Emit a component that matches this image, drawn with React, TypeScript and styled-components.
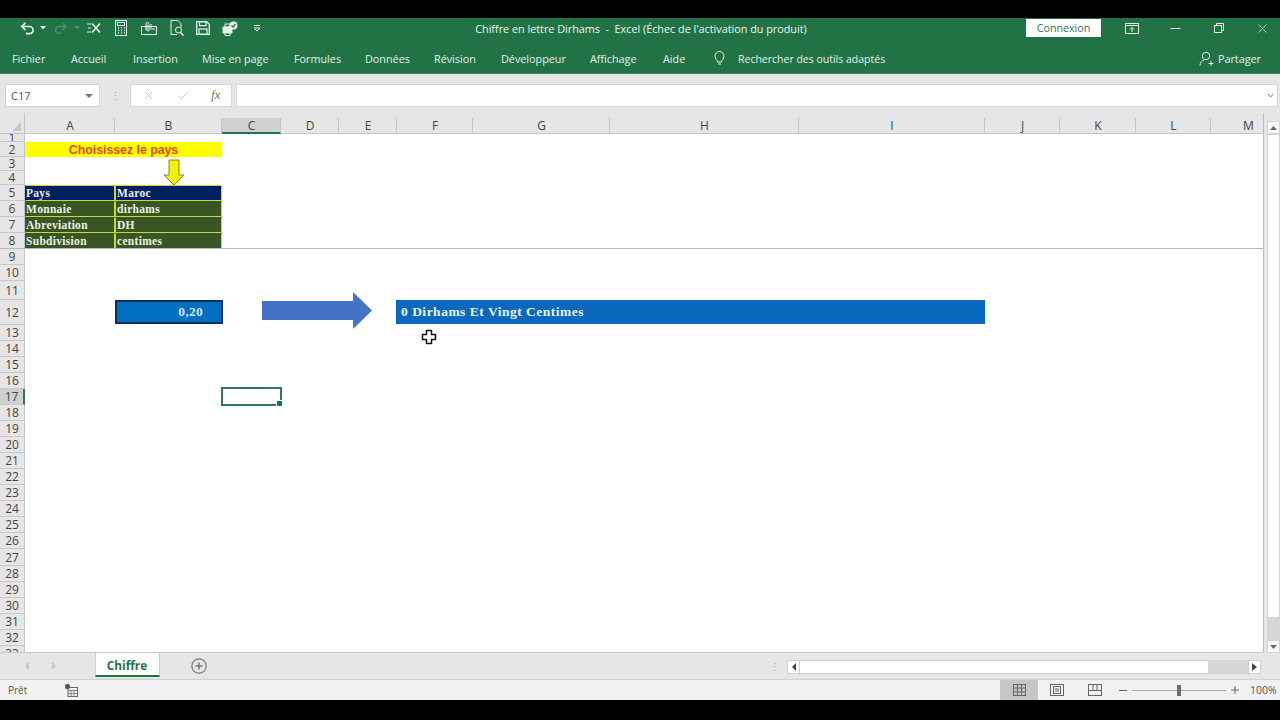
import React from "react";
import styled, { createGlobalStyle } from "styled-components";
import { X, Check, ChevronDown } from "lucide-react";

const Global = createGlobalStyle`
  html, body { margin: 0; padding: 0; background: #000; }
  #root { width: 1280px; height: 720px; overflow: hidden; }
  * { box-sizing: border-box; }
`;

const ui = `"Open Sans", "Noto Sans", sans-serif`;
const cols = [90, 107, 59, 58, 58, 76, 137, 189, 186, 75, 76, 75, 75];
const colNames = ["A", "B", "C", "D", "E", "F", "G", "H", "I", "J", "K", "L", "M"];
const rowHeights = [8, 15, 14, 14, 16, 16, 16, 16, 16, 16, 19, 25, 16, 16, 16, 16, 16, 16, 16, 16, 16, 16, 16, 16, 16, 16, 17, 16, 16, 16, 16, 16, 16];

const Page = styled.div`
  width: 1280px; height: 720px; background: #000;
  padding: 18px 0 20px; display: flex; flex-direction: column;
  font-family: ${ui};
`;
const TitleBar = styled.header`
  height: 27px; background: #217346; color: #e8f1ec; padding-bottom: 7px;
  display: grid; grid-template-columns: 1fr auto 1fr; align-items: center;
`;
const Qat = styled.div`
  display: flex; align-items: center; padding-left: 20px; height: 100%;
`;
const QatSlot = styled.span<{ $w: number; $dim?: boolean }>`
  width: ${p => p.$w}px; height: 18px; display: flex; align-items: center; flex: none;
  color: ${p => (p.$dim ? "#4f8e70" : "inherit")};
`;
const Title = styled.div`
  font-size: 10.8px; color: #eef5f1; white-space: pre; padding-left: 2px;
`;
const WindowControls = styled.div`
  display: flex; justify-content: flex-end; align-items: center; height: 100%;
`;
const Signin = styled.button`
  width: 75px; height: 18px; margin: 0 21px 0 0; padding: 0; border: 0; background: #fff;
  color: #3c7058; font: 10.7px ${ui};
`;
const WinBtn = styled.span<{ $w: number; $after: number }>`
  width: ${p => p.$w}px; margin-right: ${p => p.$after}px; display: flex; justify-content: center; align-items: center; color: #e8f1ec; flex: none;
`;
const TabBar = styled.nav`
  height: 29px; background: #217346; border-bottom: 1px solid #3f7d5f;
  display: flex; align-items: center; padding: 0 19px 1px 12px; color: #e6f0ea; font-size: 10.8px;
`;
const Tabs = styled.div`
  flex: 1; display: grid; align-items: center;
  grid-template-columns: 59px 62px 69px 92px 71px 69px 67px 89px 73px 50px auto;
`;
const Search = styled.span`
  display: flex; align-items: center; gap: 12px; font-size: 10.5px;
`;
const Share = styled.span`
  display: flex; align-items: center; gap: 4px;
`;
const FormulaBar = styled.div`
  height: 39px; background: #e6e6e6; padding: 10px 2px 6px 5px;
  display: flex; align-items: stretch;
`;
const NameBox = styled.div`
  width: 95px; background: #fff; border: 1px solid #d4d4d4; color: #555;
  font-size: 11px; display: flex; align-items: center; justify-content: space-between; padding: 0 6px 0 5px;
`;
const Caret = styled.span`
  width: 0; height: 0; border: 4px solid transparent; border-top: 4px solid #777; border-bottom: 0;
`;
const Grip = styled.span`
  width: 30px; flex: none; display: flex; justify-content: center; align-items: center;
  color: #aaa; font-size: 11px; line-height: 5px;
`;
const FxBox = styled.div`
  width: 102px; background: #fff; border: 1px solid #d9d9d9; margin-right: 4px;
  display: flex; align-items: center; padding: 0 11px; justify-content: space-between; color: #b5b5b5;
`;
const Fx = styled.i`
  font: italic 12px "Liberation Serif", serif; color: #666;
`;
const FormulaInput = styled.div`
  flex: 1; background: #fff; border: 1px solid #d9d9d9; display: flex; align-items: center; justify-content: flex-end;
  padding-right: 1px; color: #666;
`;
const Workspace = styled.div`
  display: flex; height: 540px; background: #e6e6e6;
`;
const Sheet = styled.div`
  position: relative; width: 1264px; height: 540px; overflow: hidden; background: #e6e6e6;
  border-right: 1px solid #bdbdbd; border-bottom: 1px solid #c8c8c8;
  display: grid;
  grid-template-columns: 25px ${cols.map(c => c + "px").join(" ")};
  grid-template-rows: 21px ${rowHeights.map(r => r + "px").join(" ")};
  font-family: "Liberation Sans", sans-serif;
`;
const SheetBody = styled.div`
  grid-column: 2 / -1; grid-row: 2 / -1; background: #fff;
`;
const Corner = styled.div`
  grid-column: 1; grid-row: 1; background: #e6e6e6; border-bottom: 1px solid #c4c4c4; border-right: 1px solid #c4c4c4;
  position: relative;
  &::after { content: ""; position: absolute; right: 3px; bottom: 2px; border-style: solid; border-width: 0 0 9px 9px; border-color: transparent transparent #c8c8c8 transparent; }
`;
const ColHead = styled.div<{ $i: number; $active?: boolean }>`
  grid-column: ${p => p.$i + 2}; grid-row: 1; margin-top: 5px;
  background: ${p => (p.$active ? "#d0d0d0" : "#e6e6e6")};
  border-bottom: ${p => (p.$active ? "2px solid #217346" : "1px solid #c4c4c4")};
  border-right: 1px solid #c4c4c4; color: #444; font: 12px ${ui};
  display: flex; align-items: center; justify-content: center; padding: 1px 0 0 1px; line-height: 14px;
`;
const RowHead = styled.div<{ $r: number; $active?: boolean }>`
  grid-column: 1; grid-row: ${p => p.$r + 1};
  background: ${p => (p.$active ? "#d0d0d0" : "#e6e6e6")};
  border-bottom: 1px solid #c8c8c8;
  border-right: ${p => (p.$active ? "2px solid #3a6f58" : "1px solid #c4c4c4")};
  color: #444; font: 12px ${ui};
  display: flex; align-items: center; justify-content: center; overflow: hidden; line-height: 12px; padding-top: 1px;
`;
const Heading = styled.div`
  grid-column: 2 / 4; grid-row: 3; background: #ffff00;
  color: #e2470f; font: bold 12.3px "Liberation Sans", sans-serif;
  display: flex; align-items: center; justify-content: center;
`;
const DataCell = styled.div<{ $col: number; $row: number; $head?: boolean }>`
  grid-column: ${p => p.$col + 1}; grid-row: ${p => p.$row + 1};
  background: ${p => (p.$head ? "#002060" : "#375623")};
  border: 1px solid #c6d83c; border-left-color: ${p => (p.$col === 2 ? "#c6d83c" : "transparent")};
  border-top-color: ${p => (p.$head ? "#c6d83c" : "transparent")};
  color: #eef2e4; font: bold 11.5px "Liberation Serif", serif; letter-spacing: .3px;
  display: flex; align-items: center; padding-left: ${p => (p.$col === 1 ? 0 : 1)}px; white-space: nowrap; overflow: hidden;
`;
const AmountCell = styled.div`
  grid-column: 3; grid-row: 13; background: #0070c0; border: 2px solid #10305a; margin: 0 -1px 1px 0;
  color: #d5e9f8; font: bold 13.5px "Liberation Serif", serif; letter-spacing: .3px;
  display: flex; align-items: center; justify-content: flex-end; padding-right: 18px;
`;
const ResultCell = styled.div`
  grid-column: 7 / 11; grid-row: 13; background: #0a69bd; margin: 0 0 1px -1px;
  color: #eaf3fb; font: bold 13.5px "Liberation Serif", serif; letter-spacing: .5px;
  display: flex; align-items: center; padding-left: 5px;
`;
const FreezeLine = styled.div`
  grid-column: 1 / -1; grid-row: 9; align-self: end; height: 1px; background: #b9b9b9; z-index: 1;
`;
const Selected = styled.div`
  grid-column: 4; grid-row: 18; position: relative; margin: -2px -1px 0 -1px; height: 19px;
  border: 2px solid #2f7a5c;
  &::after { content: ""; position: absolute; right: -3px; bottom: -3px; width: 5px; height: 5px; background: #217346; border: 1px solid #fff; }
`;
const Shape = styled.svg<{ $x: number; $y: number }>`
  position: absolute; left: ${p => p.$x}px; top: ${p => p.$y}px; z-index: 2;
`;
const VScroll = styled.div`
  width: 16px; display: flex; flex-direction: column; padding: 8px 0 0 3px; background: #e6e6e6;
`;
const ScrollBtn = styled.div`
  width: 13px; height: 13px; background: #fff; border: 1px solid #d4d4d4; flex: none;
  display: flex; align-items: center; justify-content: center;
`;
const ThumbV = styled.div`
  height: 484px; flex: none; background: #fff; border: 1px solid #d4d4d4;
`;
const TrackV = styled.div`
  height: 22px; flex: none; background: #d6d6d6;
`;
const TabStrip = styled.div`
  height: 27px; background: #e6e6e6; display: flex; align-items: flex-start;
  border-bottom: 1px solid #cfcfcf;
`;
const SheetNav = styled.div`
  width: 95px; height: 26px; display: flex; align-items: center; gap: 21px; padding-left: 25px; color: #c4c4c4;
  flex: none;
`;
const SheetTab = styled.div`
  width: 65px; height: 24px; background: #fff; color: #217346; font: bold 11.8px ${ui};
  border-bottom: 2px solid #217346; border-left: 1px solid #cfcfcf; border-right: 1px solid #cfcfcf;
  display: flex; align-items: center; justify-content: center; flex: none; padding: 1px 1px 0 0;
`;
const AddSheet = styled.span`
  margin: 5px 0 0 31px; width: 16px; height: 16px; flex: none; color: #777; display: flex;
`;
const HDots = styled.span`
  margin: 0 0 0 auto; width: 14px; color: #aaa; font-size: 10px; text-align: center; line-height: 26px;
`;
const HScroll = styled.div`
  width: 474px; height: 14px; margin: 7px 19px 0 5px; display: flex; flex: none; align-items: stretch;
`;
const HBtn = styled.div`
  width: 13px; background: #fff; border: 1px solid #d0d0d0; display: flex; align-items: center; justify-content: center; flex: none;
`;
const HThumb = styled.div`
  width: 408px; background: #fff; border: 1px solid #d0d0d0; border-width: 1px 0; flex: none;
`;
const HTrack = styled.div`
  flex: 1; background: #d6d6d6;
`;
const StatusBar = styled.footer`
  height: 20px; background: #f1f1f1; display: flex; align-items: center; color: #555; font-size: 10px; padding-left: 8px;
`;
const Macro = styled.span`
  margin-left: 38px; display: flex;
`;
const ViewArea = styled.div`
  margin-left: auto; display: flex; align-items: center; height: 100%;
`;
const ViewBtn = styled.span<{ $on?: boolean }>`
  width: 38px; height: 100%; display: flex; align-items: center; justify-content: center;
  background: ${p => (p.$on ? "#c6c6c6" : "transparent")}; color: #666; flex: none;
`;
const Zoomer = styled.div`
  display: flex; align-items: center; margin-left: 5px; color: #666; gap: 5px; width: 131px;
`;
const Slider = styled.div`
  position: relative; width: 94px; height: 1px; background: #a8a8a8;
`;
const Knob = styled.span`
  position: absolute; left: 45px; top: -5px; width: 4px; height: 11px; background: #6d6d6d;
`;
const Percent = styled.span`
  width: 30px; font-size: 10.5px; color: #555;
`;

const Ic = ({ children, w = 16, h = 16 }: { children: React.ReactNode; w?: number; h?: number }) => (
  <svg width={w} height={h} viewBox={`0 0 ${w} ${h}`} fill="none" stroke="currentColor" strokeWidth={1}>{children}</svg>
);

const tabs = ["Fichier", "Accueil", "Insertion", "Mise en page", "Formules", "Données", "Révision", "Développeur", "Affichage", "Aide"];
const data = [["Pays", "Maroc"], ["Monnaie", "dirhams"], ["Abreviation", "DH"], ["Subdivision", "centimes"]];

export default function App() {
  return (
    <Page>
      <Global />
      <TitleBar>
        <Qat>
          <QatSlot $w={20}><Ic w={15} h={14}><path d="M2 5.500h7.500a3.600 3.600 0 0 1 0 7.200H6" strokeWidth={1.7} /><path d="M5.500 1.800 1.800 5.500l3.700 3.700" strokeWidth={1.7} /></Ic></QatSlot>
          <QatSlot $w={14}><Ic w={6} h={4}><path d="M0 0h6L3 3.500z" fill="currentColor" stroke="none" /></Ic></QatSlot>
          <QatSlot $w={20} $dim><Ic w={13} h={14}><path d="M12 5.500H5a3.400 3.400 0 0 0 0 6.800h2" strokeWidth={1.5} /><path d="M8.500 2 12 5.500 8.500 9" strokeWidth={1.5} /></Ic></QatSlot>
          <QatSlot $w={12} $dim><Ic w={6} h={4}><path d="M0 0h6L3 3.500z" fill="currentColor" stroke="none" /></Ic></QatSlot>
          <QatSlot $w={29}><Ic w={16} h={14}><path d="M1 3h4M2 7h3M1 11h4" /><path d="M6 2.500l8 9M14 2.500l-8 9" strokeWidth={1.6} /></Ic></QatSlot>
          <QatSlot $w={26}><Ic w={13} h={16}><rect x=".5" y=".5" width="11" height="15" /><rect x="2.500" y="2.500" width="7" height="3" /><path d="M3 8h1M6 8h1M9 8h1M3 10.500h1M6 10.500h1M9 10.500h1M3 13h1M6 13h1M9 13h1" strokeWidth={1.4} /></Ic></QatSlot>
          <QatSlot $w={29}><Ic w={16} h={15}><path d="M.5 5.500h15v8H.5z" /><path d="M5 9V3a1.500 1.500 0 0 1 3 0v6a1 1 0 0 1-2 0V4M10 3v6" /><path d="M11 8h3" /></Ic></QatSlot>
          <QatSlot $w={26}><Ic w={15} h={16}><path d="M1 .5h7l3 3v4M1 .5v14h6" /><circle cx="8.500" cy="10" r="3" /><path d="M10.500 12.500l3 3" strokeWidth={1.7} /></Ic></QatSlot>
          <QatSlot $w={26}><Ic w={14} h={14}><path d="M.7.7h10l2.600 2.600v10H.7z" strokeWidth={1.3} /><rect x="3.500" y=".7" width="6.500" height="4" strokeWidth={1.2} /><rect x="3" y="8" width="8" height="5.300" strokeWidth={1.2} /></Ic></QatSlot>
          <QatSlot $w={31}><Ic w={16} h={15}><path d="M1 6h9v6H1z" fill="currentColor" /><path d="M3 12v2.500h5V12" /><rect x="3" y="3" width="5" height="3" /><circle cx="11.500" cy="4.500" r="4" fill="currentColor" stroke="none" /><path d="M9.500 4.500l1.500 1.500 2.500-3" stroke="#217346" strokeWidth={1.2} /></Ic></QatSlot>
          <QatSlot $w={10}><Ic w={8} h={7}><path d="M1 .5h6" /><path d="M1 3l3 3 3-3z" /></Ic></QatSlot>
        </Qat>
        <Title>{"Chiffre en lettre Dirhams  -  Excel (Échec de l'activation du produit)"}</Title>
        <WindowControls>
          <Signin>Connexion</Signin>
          <WinBtn $w={19} $after={25}><Ic w={14} h={11}><rect x=".5" y=".5" width="13" height="10" /><path d="M.5 2.500h13" /><path d="M7 9V4.500M5 6.500l2-2 2 2" /></Ic></WinBtn>
          <WinBtn $w={19} $after={24}><Ic w={11} h={3}><path d="M.5 1.500h10" /></Ic></WinBtn>
          <WinBtn $w={19} $after={24}><Ic w={10} h={10}><rect x=".5" y="2.500" width="7" height="7" /><path d="M2.500 2.500v-2h7v7h-2" /></Ic></WinBtn>
          <WinBtn $w={20} $after={8}><X size={15} strokeWidth={1.1} /></WinBtn>
        </WindowControls>
      </TitleBar>
      <TabBar>
        <Tabs>
          {tabs.map(t => <span key={t}>{t}</span>)}
          <Search>
            <Ic w={13} h={15}><path d="M4.500 11c0-2-2.500-3-2.500-6a4.500 4.500 0 0 1 9 0c0 3-2.500 4-2.500 6z" /><path d="M5 13h3" /></Ic>
            Rechercher des outils adaptés
          </Search>
        </Tabs>
        <Share>
          <Ic w={15} h={15}><circle cx="7" cy="5" r="3.700" /><path d="M1 14.500c0-3 2-5 4-5.500M9.500 12.500h5M12 10v5" /></Ic>
          Partager
        </Share>
      </TabBar>
      <FormulaBar>
        <NameBox>C17<Caret /></NameBox>
        <Grip>⋮</Grip>
        <FxBox>
          <X size={13} strokeWidth={1.4} />
          <Check size={14} strokeWidth={1.4} />
          <Fx>fx</Fx>
        </FxBox>
        <FormulaInput><ChevronDown size={11} strokeWidth={2} /></FormulaInput>
      </FormulaBar>
      <Workspace>
        <Sheet>
          <SheetBody />
          <Corner />
          {colNames.map((c, i) => <ColHead key={c} $i={i} $active={c === "C"}>{c}</ColHead>)}
          {rowHeights.map((_, i) => <RowHead key={i} $r={i + 1} $active={i + 1 === 17}>{i + 1}</RowHead>)}
          <Heading>Choisissez le pays</Heading>
          {data.map((row, i) => (
            <React.Fragment key={row[0]}>
              <DataCell $col={1} $row={i + 5} $head={i === 0}>{row[0]}</DataCell>
              <DataCell $col={2} $row={i + 5} $head={i === 0}>{row[1]}</DataCell>
            </React.Fragment>
          ))}
          <FreezeLine />
          <AmountCell>0,20</AmountCell>
          <ResultCell>0 Dirhams Et Vingt Centimes</ResultCell>
          <Selected />
          <Shape $x={163} $y={46} width={22} height={27} viewBox="0 0 22 27">
            <path d="M6 1h10v15h5L11 26 1 16h5z" fill="#f7f000" stroke="#7d8a2e" strokeWidth={1} />
          </Shape>
          <Shape $x={262} $y={179} width={111} height={38} viewBox="0 0 111 38">
            <path d="M0 9h91V0l19 18.500L91 37V28H0z" fill="#4472c4" />
          </Shape>
          <Shape $x={421} $y={216} width={16} height={16} viewBox="0 0 16 16">
            <path d="M5.500 1.500h5v4h4v5h-4v4h-5v-4h-4v-5h4z" fill="#fff" stroke="#111" strokeWidth={1.500} strokeLinejoin="round" />
          </Shape>
        </Sheet>
        <VScroll>
          <ScrollBtn><Ic w={7} h={4}><path d="M3.500 0 7 4H0z" fill="#666" stroke="none" /></Ic></ScrollBtn>
          <ThumbV />
          <TrackV />
          <ScrollBtn><Ic w={7} h={4}><path d="M3.500 4 7 0H0z" fill="#666" stroke="none" /></Ic></ScrollBtn>
        </VScroll>
      </Workspace>
      <TabStrip>
        <SheetNav>
          <Ic w={5} h={8}><path d="M4 0v8L0 4z" fill="currentColor" stroke="none" /></Ic>
          <Ic w={5} h={8}><path d="M1 0v8l4-4z" fill="currentColor" stroke="none" /></Ic>
        </SheetNav>
        <SheetTab>Chiffre</SheetTab>
        <AddSheet><Ic w={16} h={16}><circle cx="8" cy="8" r="7.200" strokeWidth={1.2} /><path d="M8 4.500v7M4.500 8h7" strokeWidth={1.5} /></Ic></AddSheet>
        <HDots>⋮</HDots>
        <HScroll>
          <HBtn><Ic w={4} h={8}><path d="M4 0v8L0 4z" fill="#444" stroke="none" /></Ic></HBtn>
          <HThumb />
          <HTrack />
          <HBtn><Ic w={5} h={8}><path d="M0 0v8l5-4z" fill="#444" stroke="none" /></Ic></HBtn>
        </HScroll>
      </TabStrip>
      <StatusBar>
        Prêt
        <Macro><Ic w={13} h={13}><rect x="3" y="3.500" width="9.500" height="9" stroke="#666" /><path d="M3 6.500h9.500M3 9.500h9.500M6 6.500v6M9 6.500v6" stroke="#888" /><rect x="0" y="0" width="5" height="5" rx="2" fill="#555" stroke="none" /></Ic></Macro>
        <ViewArea>
          <ViewBtn $on><Ic w={13} h={12}><rect x=".5" y=".5" width="12" height="11" /><path d="M4.500.5v11M8.500.5v11M.5 4h12M.5 8h12" /></Ic></ViewBtn>
          <ViewBtn><Ic w={14} h={12}><rect x=".5" y=".5" width="13" height="11" /><rect x="3.500" y="2.500" width="7" height="7" /><path d="M5 5h4M5 7h4" /></Ic></ViewBtn>
          <ViewBtn><Ic w={14} h={12}><rect x=".5" y=".5" width="13" height="11" /><path d="M5 .5v6h4v-6M.5 6.500H5M9 6.500h4.500" /></Ic></ViewBtn>
          <Zoomer>
            <Ic w={8} h={3}><path d="M0 1.500h8" /></Ic>
            <Slider><Knob /></Slider>
            <Ic w={8} h={8}><path d="M0 4h8M4 0v8" /></Ic>
          </Zoomer>
          <Percent>100%</Percent>
        </ViewArea>
      </StatusBar>
    </Page>
  );
}
